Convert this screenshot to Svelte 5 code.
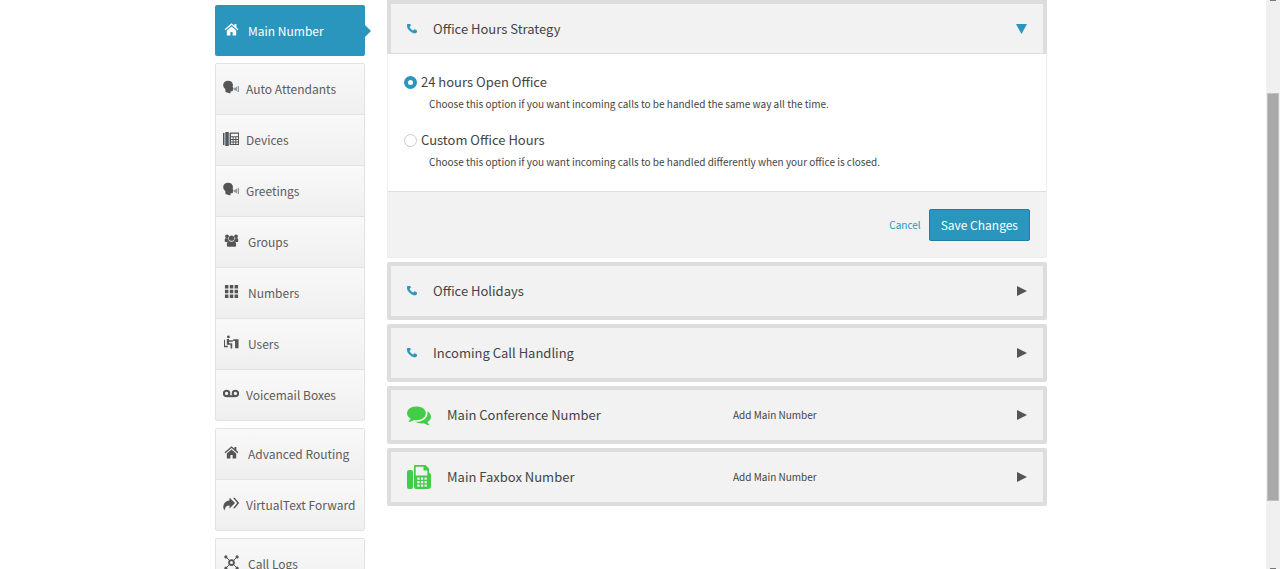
<script>
  const navGroups = [
    {
      items: [
        { label: 'Auto Attendants', icon: 'speak', near: true },
        { label: 'Devices', icon: 'device', near: true },
        { label: 'Greetings', icon: 'speak', near: true },
        { label: 'Groups', icon: 'group' },
        { label: 'Numbers', icon: 'grid' },
        { label: 'Users', icon: 'user' },
        { label: 'Voicemail Boxes', icon: 'voicemail', near: true }
      ]
    },
    {
      items: [
        { label: 'Advanced Routing', icon: 'home' },
        { label: 'VirtualText Forward', icon: 'forward', near: true }
      ]
    },
    {
      items: [{ label: 'Call Logs', icon: 'hub' }]
    }
  ];

  const panels = [
    { title: 'Office Holidays', icon: 'phone' },
    { title: 'Incoming Call Handling', icon: 'phone' },
    { title: 'Main Conference Number', icon: 'chat', action: 'Add Main Number' },
    { title: 'Main Faxbox Number', icon: 'fax', action: 'Add Main Number' }
  ];

  let strategy = $state('open');
</script>

{#snippet navIcon(name)}
  <svg class="nav-icon" viewBox="0 0 16 16" aria-hidden="true">
    {#if name === 'home'}
      <path d="M8 1.2.6 7.600l1 1.200L8 3.300l6.400 5.500 1-1.200-2.200-1.900V2h-2v2z" />
      <path d="M8 4.700 3 9V14.500h3.800v-3.800h2.400v3.800H13V9z" />
    {:else if name === 'speak'}
      <path d="M5 .8C2.200.8.2 2.500.2 5c0 1.900.8 2.700 1.800 3.700.6.7.5 2 .4 3.300l5 1.500.3-2.300h1.500c.6 0 .8-.4.7-1.400l.6-1-.8-2 .3-1.800C9.800 2.300 7.800.8 5 .8z" />
      <path class="wave" d="M11 7.800h1.200L14 6.500v5l-1.800-1.300H11zM14.700 6h1.300v6h-1.300z" />
    {:else if name === 'device'}
      <path d="M0 2h1.500v12H0zM2.300 1h3.500v14H2.300z" />
      <path class="edge" d="M5.800 2h1.200v12H5.800z" />
      <path fill-rule="evenodd" d="M7 1.500h9v12.500H7zM8 2.700v2.500h7V2.700zM8 6.300v1.600h1.700V6.300zM10.600 6.300v1.600h1.700V6.300zM13.300 6.300v1.600H15V6.300zM8 8.900v1.600h1.700V8.900zM10.600 8.900v1.600h1.700V8.900zM13.300 8.900v1.600H15V8.900zM8 11.500V13h1.700v-1.500zM10.600 11.500V13h1.700v-1.500zM13.300 11.500V13H15v-1.500z" />
    {:else if name === 'group'}
      <circle cx="3.200" cy="3.500" r="2" />
      <circle cx="12.800" cy="3.500" r="2" />
      <circle cx="8" cy="5.500" r="2.800" />
      <path d="M.8 9V7.200C.8 6 1.500 5.500 2.500 5.700h2C4.700 7 5 8 5.600 8.700 4.700 8.700 4 9 3.500 9.500H1.300zM15.200 9V7.200c0-1.200-.7-1.700-1.700-1.500h-2c-.2 1.300-.5 2.300-1.100 3 .9 0 1.600.3 2.100.8h2.200z" />
      <path d="M5.300 8.500c1.700 1 3.700 1 5.400 0 1.600.3 2.300 2 2.300 4.200 0 1.300-.8 2-2 2H5c-1.200 0-2-.7-2-2 0-2.200.7-3.900 2.300-4.200z" />
    {:else if name === 'grid'}
      <path d="M1 1h3.700v3.700H1zM6.200 1h3.700v3.700H6.200zM11.300 1H15v3.700h-3.700zM1 6.200h3.700v3.700H1zM6.200 6.200h3.700v3.700H6.200zM11.300 6.200H15v3.700h-3.700zM1 11.300h3.700V15H1zM6.200 11.300h3.700V15H6.200zM11.300 11.300H15V15h-3.700z" />
    {:else if name === 'user'}
      <circle cx="4.700" cy="2" r="1.500" />
      <path d="M0 5h1.100v6.500h3V13H0zM3 4.200h2.300v1.500H9.500V7.200H5.500v1.500h3.300V14.500H7v-4.200H3z" />
      <path d="M9.800 4.500H15.500v9.500h-3.700V6.500h-2z" />
    {:else if name === 'voicemail'}
      <path class="line" d="M3.500 10.200h9.200" />
      <circle class="line" cx="3.600" cy="7.400" r="2.700" />
      <circle class="line" cx="12.400" cy="7.400" r="2.700" />
    {:else if name === 'forward'}
      <path d="M6.500 1.500 12 7l-5.500 5.500V9.500C3.700 9.400 2.300 10.500 1.500 14.500 0 12.500-.1 10 1.100 7.800 2.100 5.700 4 4.600 6.500 4.500z" />
      <path d="M10 1.800h1.700L16.200 7l-4.500 5.200H10L14.200 7z" />
    {:else if name === 'hub'}
      <path class="thin" d="m2 2 4 4M14 2l-4 4M2 14l4-4M14 14l-4-4" />
      <circle class="line" cx="8" cy="8" r="2.600" />
      <circle cx="2" cy="2" r="1.700" />
      <circle cx="14" cy="2" r="1.700" />
      <circle cx="2" cy="14" r="1.700" />
      <circle cx="14" cy="14" r="1.700" />
    {/if}
  </svg>
{/snippet}

{#snippet panelIcon(name)}
  {#if name === 'phone'}
    <svg class="phone" viewBox="192 256 1408 1408" aria-hidden="true">
      <path d="M1600 1240q0 27-10 70.500t-21 68.500q-21 50-122 106-94 51-186 51-27 0-53-3.500t-57-12.500-47-14.500-55.500-20.500-49.500-18q-98-35-175-83-127-79-264-216t-216-264q-48-77-83-175-3-9-18-49.500t-20.500-55.500-14.500-47-12.500-57-3.500-53q0-92 51-186 56-101 106-122 25-11 68.500-21t70.500-10q14 0 21 3 18 6 53 76 11 19 30 54t35 63.500 31 53.500q3 4 17.500 25t21.500 35.500 7 28.500q0 20-28.500 50t-62 55-62 53-28.500 46q0 9 5 22.500t8.500 20.500 14 24 11.500 19q76 137 174 235t235 174q2 1 19 11.500t24 14 20.500 8.500 22.500 5q18 0 46-28.500t53-62 55-62 50-28.500q14 0 28.500 7t35.500 21.500 25 17.500q25 15 53.500 31t63.500 35 54 30q70 35 76 53 3 7 3 21z" />
    </svg>
  {:else if name === 'chat'}
    <svg class="large" viewBox="0 0 1792 1792" aria-hidden="true">
      <path d="M1408 768q0 139-94 257t-256.500 186.500-353.500 68.500q-86 0-176-16-124 88-278 128-36 9-86 16h-3q-11 0-20.500-8t-11.500-21q-1-3-1-6.500t.5-6.500 2-6l2.500-5 3.500-5.500 4-5 4.500-5 4-4.500q5-6 23-25t26-29.500 22.500-29 25-38.500 20.500-44q-124-72-195-177t-71-224q0-139 94-257t256.500-186.500 353.500-68.500 353.500 68.500 256.500 186.500 94 257zm384 256q0 120-71 224.500t-195 176.500q10 24 20.500 44t25 38.500 22.500 29 26 29.500 23 25q1 1 4 4.500t4.500 5 4 5 3.500 5.500l2.500 5 2 6 .5 6.500-1 6.500q-3 14-13 22t-22 7q-50-7-86-16-154-40-278-128-90 16-176 16-271 0-472-132 58 4 88 4 161 0 309-45t264-129q125-92 192-212t67-254q0-77-23-152 129 71 204 178t75 230z" />
    </svg>
  {:else}
    <svg class="large" viewBox="0 0 24 24" aria-hidden="true">
      <rect x="0" y="5" width="6" height="19" rx="2" />
      <path fill-rule="evenodd" d="M8.300 0h10.200L22 3.500v4c1.200.6 2 1.600 2 3V21a3 3 0 0 1-3 3H9a2 2 0 0 1-2-2V1.300C7 .5 7.500 0 8.300 0zM8.700 1.800V10.500H20.300V5.500H16.500V1.800zM10.300 12.500v2.300h2.300v-2.300zM13.900 12.500v2.300h2.300v-2.300zM17.500 12.500v2.300h2.300v-2.300zM10.300 16v2.300h2.300V16zM13.900 16v2.300h2.300V16zM17.500 16v2.300h2.300V16zM10.300 19.500v2.300h2.300v-2.300zM13.900 19.500v2.300h2.300v-2.300zM17.500 19.500v2.300h2.300v-2.300z" />
    </svg>
  {/if}
{/snippet}

<div class="page">
  <div class="scroll-area">
    <div class="layout">
      <nav class="sidebar">
        <a class="nav-link active" href="#main-number">
          {@render navIcon('home')}
          Main Number
        </a>
        {#each navGroups as group}
          <ul class="nav-group">
            {#each group.items as item}
              <li>
                <a class="nav-link" class:near={item.near} href="#{item.icon}">
                  {@render navIcon(item.icon)}
                  {item.label}
                </a>
              </li>
            {/each}
          </ul>
        {/each}
      </nav>

      <main class="content">
        <section>
          <button class="panel-header open" aria-expanded="true">
            <span class="icon-slot">{@render panelIcon('phone')}</span>
            <span class="title">Office Hours Strategy</span>
            <svg class="arrow down" viewBox="0 0 11 10" aria-hidden="true"><path d="M0 0h11L5.500 10z" /></svg>
          </button>
          <div class="panel-body">
            <div class="options">
              <div class="option">
                <label><input type="radio" name="strategy" value="open" bind:group={strategy} />24 hours Open Office</label>
                <p>Choose this option if you want incoming calls to be handled the same way all the time.</p>
              </div>
              <div class="option">
                <label><input type="radio" name="strategy" value="custom" bind:group={strategy} />Custom Office Hours</label>
                <p>Choose this option if you want incoming calls to be handled differently when your office is closed.</p>
              </div>
            </div>
            <div class="actions">
              <a href="#cancel">Cancel</a>
              <button class="save">Save Changes</button>
            </div>
          </div>
        </section>

        {#each panels as panel}
          <button class="panel-header" aria-expanded="false">
            <span class="icon-slot" class:wide={panel.action}>{@render panelIcon(panel.icon)}</span>
            <span class="title">{panel.title}</span>
            {#if panel.action}
              <span class="add">{panel.action}</span>
            {/if}
            <svg class="arrow" viewBox="0 0 10 10" aria-hidden="true"><path d="M0 0l10 5-10 5z" /></svg>
          </button>
        {/each}
      </main>
    </div>
  </div>

  <div class="scrollbar" aria-hidden="true">
    <div class="before"></div>
    <div class="thumb"></div>
    <div class="after"></div>
  </div>
</div>

<style>
  :global(body) {
    background: #fff;
    font-family: "Noto Sans CJK SC", "Open Sans", sans-serif;
    color: #444;
  }

  .page {
    display: flex;
    height: 100vh;
    overflow: hidden;
  }

  .scroll-area {
    flex: 1;
    overflow: hidden;
  }

  .layout {
    display: grid;
    grid-template-columns: 150px 1fr;
    gap: 22px;
    max-width: 832px;
    margin: 0 auto;
    padding-right: 4px;
  }

  .sidebar {
    display: flex;
    flex-direction: column;
    gap: 7px;
    padding-top: 5px;
  }

  .nav-group {
    list-style: none;
    margin: 0;
    padding: 0;
    border: 1px solid #e2e2e2;
    border-radius: 2px;
  }

  .nav-group li + li {
    border-top: 1px solid #e2e2e2;
  }

  .nav-link {
    display: flex;
    align-items: center;
    gap: 9px;
    height: 50px;
    box-sizing: border-box;
    padding-left: 8px;
    font-size: 12px;
    line-height: 20px;
    color: #5c5c5c;
    white-space: nowrap;
    text-decoration: none;
    background: linear-gradient(#f9f9f9, #efefef);
  }

  .nav-link.near {
    gap: 7px;
    padding-left: 7px;
  }

  .nav-link.active {
    position: relative;
    height: 51px;
    padding-left: 9px;
    color: #fff;
    background: #2a96bd;
    border-radius: 2px;
  }

  .nav-link.active::after {
    content: "";
    position: absolute;
    left: 100%;
    top: 50%;
    margin-top: -6px;
    border: 6px solid transparent;
    border-left-color: #2a96bd;
    border-right-width: 0;
  }

  .nav-icon {
    width: 15px;
    height: 15px;
    margin-bottom: 3px;
    fill: #555;
  }

  .near .nav-icon {
    width: 16px;
    height: 16px;
  }

  .active .nav-icon {
    fill: #fff;
  }

  .wave {
    fill: #8d9aa3;
  }

  .edge {
    fill: #8fb2d0;
  }

  .line,
  .thin {
    fill: none;
    stroke: #555;
    stroke-width: 2;
  }

  .thin {
    stroke-width: 1;
  }

  .content {
    display: flex;
    flex-direction: column;
    gap: 4px;
  }

  .panel-header {
    display: flex;
    align-items: center;
    width: 100%;
    height: 58px;
    box-sizing: border-box;
    padding: 0 16px;
    border: 4px solid #ddd;
    border-radius: 2px;
    background: #f2f2f2;
    font-family: inherit;
    font-size: 13px;
    line-height: 20px;
    color: #444;
    text-align: left;
    cursor: pointer;
  }

  .panel-header.open {
    height: 54px;
    border-bottom: 1px solid #ddd;
    border-radius: 0;
  }

  .icon-slot {
    display: flex;
    width: 26px;
  }

  .icon-slot.wide {
    width: 40px;
  }

  .phone {
    width: 10px;
    height: 10px;
    fill: #2a96bd;
    stroke: #2a96bd;
    stroke-width: 80;
  }

  .large {
    width: 24px;
    height: 24px;
    fill: #43cc47;
  }

  .title {
    flex: 1;
  }

  .add {
    width: 284px;
    font-size: 10px;
  }

  .arrow {
    width: 10px;
    height: 10px;
    fill: #555;
  }

  .arrow.down {
    width: 11px;
    fill: #2a96bd;
  }

  .panel-body {
    border: 1px solid #eee;
    border-top: 0;
  }

  .options {
    display: flex;
    flex-direction: column;
    gap: 18px;
    padding: 18px 16px 21px;
  }

  .option label {
    display: flex;
    align-items: center;
    gap: 4px;
    font-size: 13px;
    line-height: 20px;
  }

  .option input {
    appearance: none;
    width: 13px;
    height: 13px;
    margin: 0;
    box-sizing: border-box;
    border: 1px solid #ccc;
    border-radius: 50%;
    background: #fff;
  }

  .option input:checked {
    border: 4px solid #2a96bd;
  }

  .option p {
    margin: 4px 0 0 25px;
    font-size: 10px;
    line-height: 16px;
  }

  .actions {
    display: flex;
    justify-content: flex-end;
    align-items: center;
    gap: 8px;
    height: 65px;
    padding-right: 16px;
    border-top: 1px solid #ddd;
    background: #f2f2f2;
  }

  .actions a {
    font-size: 10px;
    color: #2a96bd;
    text-decoration: none;
  }

  .save {
    height: 32px;
    padding: 0 11px;
    border: 1px solid #1f7da0;
    border-radius: 2px;
    background: #2a96bd;
    font-family: inherit;
    font-size: 12px;
    color: #fff;
  }

  .scrollbar {
    display: flex;
    flex-direction: column;
    align-items: center;
    width: 14px;
    background: #f0f0f0;
  }

  .before,
  .after {
    width: 6px;
    box-sizing: border-box;
  }

  .before {
    flex: 93;
    border-top: 1px solid #777;
  }

  .after {
    flex: 67;
    border-bottom: 1px solid #777;
  }

  .thumb {
    flex: 409;
    width: 12px;
    box-sizing: border-box;
    border: 1px solid #c1c1c1;
    background: #a8a8a8;
  }
</style>
